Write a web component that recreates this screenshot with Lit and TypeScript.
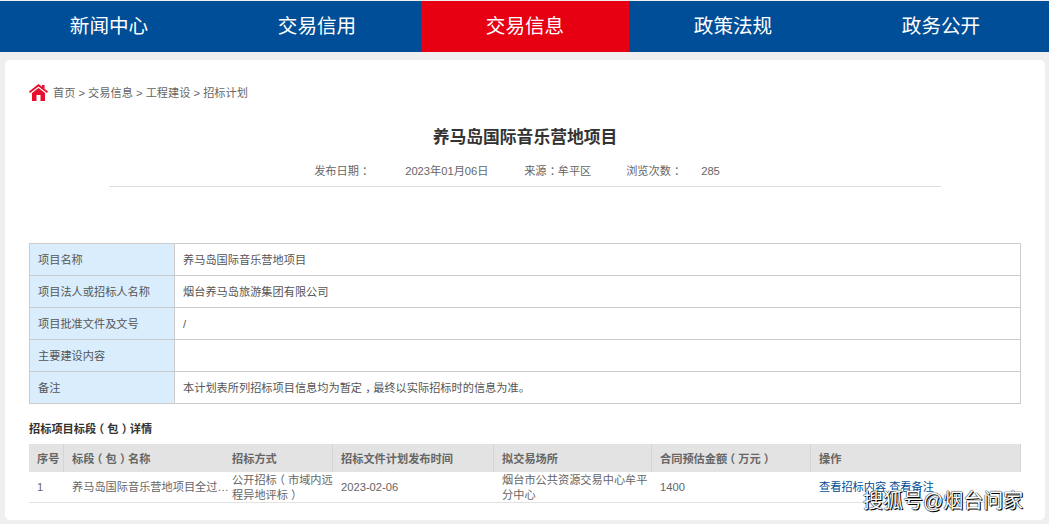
import { LitElement, html, css } from "lit";
import { customElement } from "lit/decorators.js";

const NAV = ["新闻中心", "交易信用", "交易信息", "政策法规", "政务公开"];
const INFO: [string, string][] = [
  ["项目名称", "养马岛国际音乐营地项目"],
  ["项目法人或招标人名称", "烟台养马岛旅游集团有限公司"],
  ["项目批准文件及文号", "/"],
  ["主要建设内容", ""],
  ["备注", "本计划表所列招标项目信息均为暂定，最终以实际招标时的信息为准。"],
];
const HEAD = ["序号", "标段（包）名称", "招标方式", "招标文件计划发布时间", "拟交易场所", "合同预估金额（万元）", "操作"];

/* The reference font centres full-width punctuation in its em box; shift the glyphs to match. */
function fmt(s: string) {
  return s.split(/([（）：，])/).map((part) => {
    if (part === "（") return html`<span class="pl">${part}</span>`;
    if (part === "）" || part === "：" || part === "，") return html`<span class="pr">${part}</span>`;
    return part;
  });
}

@customElement("app-root")
export class AppRoot extends LitElement {
  static styles = css`
    :host {
      display: block;
      position: relative;
      width: 1049px;
      height: 524px;
      overflow: hidden;
      background: #efefef;
      font-family: "Liberation Sans", "Noto Sans CJK SC", sans-serif;
      font-size: 11.2px;
      color: #666;
      padding-top: 1px;
      box-sizing: border-box;
    }
    .pl, .pr { display: inline-block; width: 1em; }
    .pl { transform: translateX(-0.28em); }
    .pr { transform: translateX(0.28em); }
    .nav {
      display: flex;
      height: 51px;
      padding-left: 5px;
      background: #004e97;
    }
    .nav-item {
      width: 208px;
      height: 51px;
      line-height: 51px;
      text-align: center;
      font-size: 19.6px;
      color: #fff;
    }
    .nav-item.active {
      background: #e60012;
    }
    .card {
      margin: 8px 4px 0 5px;
      height: 460px;
      box-sizing: border-box;
      background: #fff;
      border-radius: 5px;
      padding: 22px 24px 0;
      display: flex;
      flex-direction: column;
    }
    .crumbs {
      display: flex;
      align-items: center;
      gap: 5px;
      height: 20px;
    }
    .crumbs svg {
      width: 19px;
      height: 17px;
      display: block;
    }
    .title {
      margin: 26px 0 0;
      height: 20px;
      line-height: 20px;
      text-align: center;
      font-size: 16.8px;
      font-weight: 700;
      color: #333;
    }
    .meta {
      margin: 13px 80px 0;
      padding-right: 16px;
      height: 25px;
      line-height: 20px;
      border-bottom: 1px solid #ddd;
      display: flex;
      justify-content: center;
    }
    .meta span { white-space: pre; }
    .m1 { width: 91px; }
    .m2 { width: 119px; }
    .m3 { width: 102px; }
    .m4 { width: 75px; }
    .info {
      margin-top: 56px;
      border: 1px solid #ccc;
      border-bottom: 0;
      display: grid;
      grid-template-columns: 145px 1fr;
    }
    .info > div {
      height: 31px;
      line-height: 33px;
      border-bottom: 1px solid #ccc;
      padding-left: 8px;
      color: #555;
    }
    .info .k {
      background: #d9edfd;
      border-right: 1px solid #ccc;
    }
    .sub {
      margin-top: 17px;
      height: 16px;
      line-height: 16px;
      font-weight: 700;
      color: #333;
    }
    .grid {
      margin-top: 7px;
      display: grid;
      grid-template-columns: 35px 160px 109px 161px 158px 159px 210px;
    }
    .h {
      height: 28px;
      line-height: 30px;
      background: #e3e3e3;
      font-weight: 700;
      color: #666;
      padding-left: 8px;
      box-sizing: border-box;
      border-right: 1px solid #d4d4d4;
      white-space: nowrap;
    }
    .h.plain { border-right: 0; }
    .c {
      height: 31px;
      box-sizing: border-box;
      border-bottom: 1px solid #e3e3e3;
      padding: 0 0 0 8px;
      display: flex;
      align-items: center;
      line-height: 15px;
      min-width: 0;
    }
    .c > div { min-width: 0; }
    .wrap { padding-top: 2px; }
    .clip {
      flex: none;
      width: 157px;
      overflow: hidden;
      white-space: nowrap;
      text-overflow: ellipsis;
    }
    .ops { color: #004e97; gap: 3px; }
    .mark {
      position: absolute;
      left: 863px;
      top: 489px;
      font-size: 20px;
      line-height: 24px;
      color: #fff;
      white-space: nowrap;
      text-shadow: 1px 1px 0 #000, 0 0 1px #000, 0 0 1px #000;
    }
  `;

  render() {
    return html`
      <div class="nav">
        ${NAV.map((n, i) => html`<div class="nav-item ${i === 2 ? "active" : ""}">${n}</div>`)}
      </div>
      <div class="card">
        <div class="crumbs">
          <svg viewBox="0 0 19 17" fill="#e60f2d">
            <path d="M9.5 0 L13 2.8 V1 H15.5 V4.8 L19 7.6 L18 9 L9.5 2.4 L1 9 L0 7.6 Z" />
            <path d="M3 9 L9.5 4 L16 9 V17 H11.5 V11 H7.5 V17 H3 Z" />
          </svg>
          <span>首页 &gt; 交易信息 &gt; 工程建设 &gt; 招标计划</span>
        </div>
        <h1 class="title">养马岛国际音乐营地项目</h1>
        <div class="meta">
          <span class="m1">${fmt("发布日期：")}</span>
          <span class="m2">2023年01月06日</span>
          <span class="m3">${fmt("来源：牟平区")}</span>
          <span class="m4">${fmt("浏览次数：")}</span>
          <span>285</span>
        </div>
        <div class="info">
          ${INFO.map(([k, v]) => html`<div class="k">${k}</div><div>${fmt(v)}</div>`)}
        </div>
        <div class="sub">${fmt("招标项目标段（包）详情")}</div>
        <div class="grid">
          ${HEAD.map((h, i) => html`<div class="h ${i === 1 ? "plain" : ""}">${fmt(h)}</div>`)}
          <div class="c">1</div>
          <div class="c"><div class="clip">养马岛国际音乐营地项目全过程造价咨询</div></div>
          <div class="c"><div class="wrap">${fmt("公开招标（市域内远程异地评标）")}</div></div>
          <div class="c">2023-02-06</div>
          <div class="c"><div class="wrap">烟台市公共资源交易中心牟平分中心</div></div>
          <div class="c">1400</div>
          <div class="c ops"><span>查看招标内容</span><span>查看备注</span></div>
        </div>
      </div>
      <div class="mark">搜狐号@烟台问家</div>
    `;
  }
}
